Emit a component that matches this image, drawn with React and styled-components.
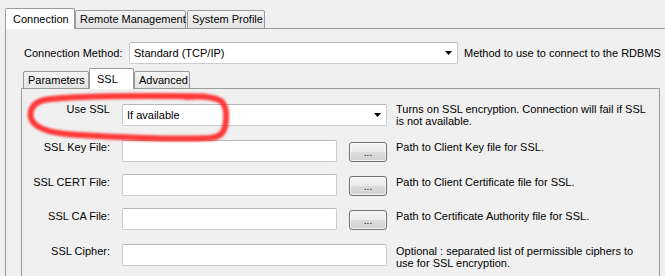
import React from 'react';
import styled, { createGlobalStyle } from 'styled-components';

const Global = createGlobalStyle`
  html, body { margin: 0; padding: 0; background: #f0f0f0; overflow: hidden; }
  body {
    font-family: "Liberation Sans", Arial, sans-serif;
    font-size: 11px;
    color: #000;
  }
  #root { width: 665px; height: 276px; }
`;

const Page = styled.div`
  position: relative;
  box-sizing: border-box;
  width: 665px;
  height: 276px;
  overflow: hidden;
  padding: 8px 0 0 5px;
`;

const TabStrip = styled.div`
  position: relative;
  z-index: 1;
  display: flex;
  align-items: flex-end;
  height: ${(p) => p.$h}px;
  padding-left: ${(p) => p.$indent || 0}px;
  margin-bottom: -1px;
`;

const Tab = styled.div`
  box-sizing: border-box;
  flex: none;
  display: flex;
  align-items: center;
  width: ${(p) => p.$w}px;
  height: ${(p) => p.$h}px;
  margin-left: ${(p) => p.$gap || 0}px;
  padding-left: ${(p) => (p.$active ? 7 : 4)}px;
  border: 1px solid #9a9a9a;
  border-bottom: ${(p) => (p.$active ? 'none' : '1px solid #9a9a9a')};
  border-radius: 2px 2px 0 0;
  background: ${(p) => (p.$active ? '#ffffff' : 'linear-gradient(#f4f4f4, #e4e4e4)')};
  white-space: nowrap;
  line-height: 13px;
`;

const OuterPanel = styled.div`
  box-sizing: border-box;
  width: 700px;
  height: 300px;
  border: 1px solid #9a9a9a;
  background: #f0f0f0;
  padding: 13px 0 0 15px;
`;

const MethodRow = styled.div`
  display: flex;
  align-items: center;
  height: 22px;
  padding-left: 3px;
`;

const MethodLabel = styled.div`
  width: 105px;
  flex: none;
  white-space: nowrap;
`;

const Combo = styled.div`
  box-sizing: border-box;
  flex: none;
  display: flex;
  align-items: center;
  width: ${(p) => p.$w}px;
  height: 22px;
  padding: 0 5px 0 4px;
  background: #fff;
  border: 1px solid #c9ccd1;
  border-top-color: #b4b7bd;
  border-radius: 2px;
  white-space: nowrap;
`;

const ComboText = styled.span`
  flex: 1;
`;

const Hint = styled.div`
  margin-left: 6px;
  white-space: nowrap;
`;

const InnerTabs = styled.div`
  margin-top: 4px;
`;

const InnerPanel = styled.div`
  box-sizing: border-box;
  width: 639px;
  height: 220px;
  border: 1px solid #9a9a9a;
  padding-top: 15px;
`;

const Row = styled.div`
  display: flex;
  align-items: flex-start;
  height: ${(p) => p.$h}px;
`;

const FieldLabel = styled.div`
  flex: none;
  width: 88px;
  text-align: right;
  line-height: 12px;
  margin-top: ${(p) => p.$off}px;
  white-space: nowrap;
`;

const Field = styled.div`
  flex: none;
  display: flex;
  align-items: flex-start;
  width: 265px;
  margin-left: 12px;
`;

const TextBox = styled.div`
  box-sizing: border-box;
  flex: none;
  width: ${(p) => p.$w}px;
  height: 22px;
  background: #fff;
  border: 1px solid #c9ccd1;
  border-top-color: #b4b7bd;
  border-radius: 2px;
`;

const Browse = styled.div`
  box-sizing: border-box;
  flex: none;
  width: 38px;
  height: 20px;
  margin: 2px 0 0 12px;
  border: 1px solid #707070;
  border-radius: 3px;
  background: linear-gradient(#f3f3f3 0%, #ebebeb 48%, #dcdcdc 52%, #d0d0d0 100%);
  box-shadow: inset 0 0 0 1px rgba(255, 255, 255, 0.7);
  display: flex;
  align-items: center;
  justify-content: center;
  line-height: 12px;
  padding-top: 2px;
  font-size: 10px;
`;

const Desc = styled.div`
  margin-left: 9px;
  margin-top: ${(p) => p.$off}px;
  width: 250px;
  line-height: 12px;
`;

const Annotation = styled.svg`
  position: absolute;
  left: 0;
  top: 0;
  width: 665px;
  height: 276px;
  pointer-events: none;
  z-index: 5;
`;

const Arrow = () => (
  <svg width="7" height="4" viewBox="0 0 7 4" style={{ display: 'block' }}>
    <polygon points="0,0 7,0 3.5,4" fill="#000" />
  </svg>
);

const rows = [
  { label: 'Use SSL', kind: 'combo', value: 'If available', h: 36, off: -1,
    desc: 'Turns on SSL encryption. Connection will fail if SSL is not available.' },
  { label: 'SSL Key File:', kind: 'file', h: 34, off: 1, desc: 'Path to Client Key file for SSL.' },
  { label: 'SSL CERT File:', kind: 'file', h: 34, off: 1.5, desc: 'Path to Client Certificate file for SSL.' },
  { label: 'SSL CA File:', kind: 'file', h: 36, off: 1.5, desc: 'Path to Certificate Authority file for SSL.' },
  { label: 'SSL Cipher:', kind: 'text', h: 34, off: 0.5,
    desc: 'Optional : separated list of permissible ciphers to use for SSL encryption.' },
];

export default function App() {
  return (
    <>
      <Global />
      <Page>
        <TabStrip $h={21}>
          <Tab $active $w={70} $h={21}>Connection</Tab>
          <Tab $w={111} $h={19} $gap={0}>Remote Management</Tab>
          <Tab $w={78} $h={19} $gap={1}>System Profile</Tab>
        </TabStrip>
        <OuterPanel>
          <MethodRow>
            <MethodLabel>Connection Method:</MethodLabel>
            <Combo $w={329}>
              <ComboText>Standard (TCP/IP)</ComboText>
              <Arrow />
            </Combo>
            <Hint>Method to use to connect to the RDBMS</Hint>
          </MethodRow>
          <InnerTabs>
            <TabStrip $h={21} $indent={2}>
              <Tab $w={66} $h={18}>Parameters</Tab>
              <Tab $active $w={45} $h={21}>SSL</Tab>
              <Tab $w={56} $h={18}>Advanced</Tab>
            </TabStrip>
            <InnerPanel>
              {rows.map((r) => (
                <Row key={r.label} $h={r.h}>
                  <FieldLabel $off={r.off}>{r.label}</FieldLabel>
                  <Field>
                    {r.kind === 'combo' && (
                      <Combo $w={265}>
                        <ComboText>{r.value}</ComboText>
                        <Arrow />
                      </Combo>
                    )}
                    {r.kind === 'file' && (
                      <>
                        <TextBox $w={215} />
                        <Browse>...</Browse>
                      </>
                    )}
                    {r.kind === 'text' && <TextBox $w={265} />}
                  </Field>
                  <Desc $off={r.off}>{r.desc}</Desc>
                </Row>
              ))}
            </InnerPanel>
          </InnerTabs>
        </OuterPanel>
        <Annotation viewBox="0 0 665 276">
          <defs>
            <filter id="soft" x="-10%" y="-10%" width="120%" height="120%">
              <feGaussianBlur stdDeviation="0.9" />
            </filter>
          </defs>
          <path
            d="M 186 97 C 200 96, 214 97, 221 101 C 227 106, 227 118, 225 127 C 223 134, 219 137, 210 138 C 175 139.5, 115 137.5, 72 134.5 C 50 133, 34 128, 31 118 C 29 110, 33 103, 44 100 C 70 96, 130 95.5, 205 96.5"
            fill="none"
            stroke="#ff2626"
            strokeWidth="6"
            strokeLinecap="round"
            strokeLinejoin="round"
            opacity="0.9"
            filter="url(#soft)"
          />
        </Annotation>
      </Page>
    </>
  );
}
